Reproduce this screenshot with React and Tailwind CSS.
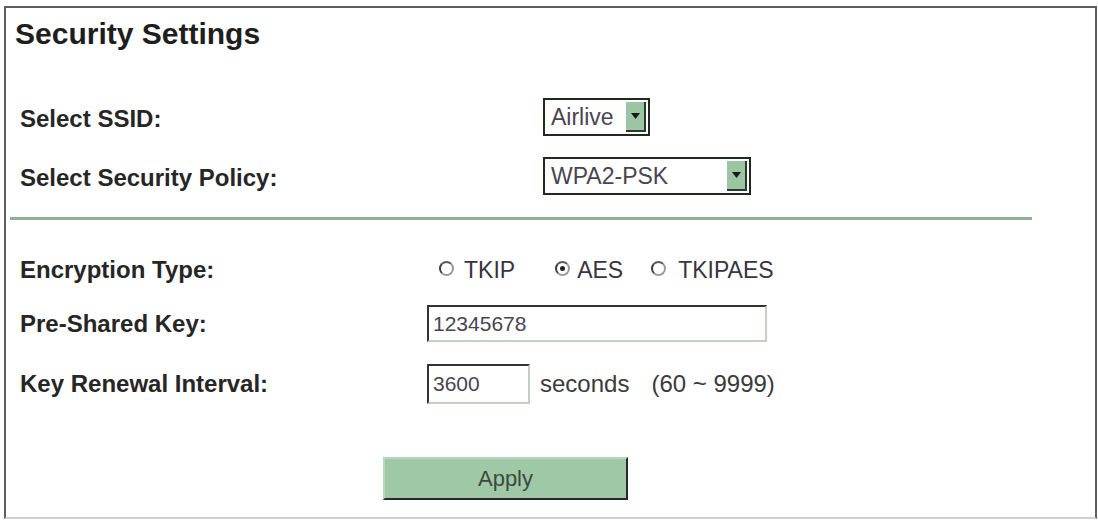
import React from "react";

const font = { fontFamily: '"Liberation Sans", Arial, sans-serif' };

function Select({ value, width }) {
  return (
    <div
      className={`flex h-[38px] items-stretch border-2 border-[#1f2a1f] bg-white ${width}`}
    >
      <div className="flex flex-1 items-center pl-[6px] text-[23px] text-[#4a4450]">
        {value}
      </div>
      <div className="my-[2px] mr-[2px] flex w-[20px] items-center justify-center border-r-2 border-b-2 border-[#2c3a2c] bg-[#9cc6a3]">
        <svg width="9" height="6" viewBox="0 0 9 6">
          <path d="M0 0 H9 L4.5 6 Z" fill="#1a1a1a" />
        </svg>
      </div>
    </div>
  );
}

function Radio({ checked }) {
  return (
    <span className="-mt-[3px] inline-flex h-[15px] w-[15px] shrink-0 items-center justify-center rounded-full border-2 border-[#9a9a9a] border-l-[#3a3a3a] border-t-[#5a5a5a] bg-white">
      {checked && <span className="h-[5px] w-[5px] rounded-full bg-[#222]" />}
    </span>
  );
}

function TextBox({ value, width, height }) {
  return (
    <div
      className={`flex items-center border-2 border-t-[#333] border-l-[#333] border-r-[#c4d0c4] border-b-[#c4d0c4] bg-white pl-[4px] text-[21px] text-[#4a4450] ${width} ${height}`}
    >
      {value}
    </div>
  );
}

export default function App() {
  return (
    <div className="h-[520px] w-[1098px] bg-white pt-[6px] pl-[4px]" style={font}>
      <div className="h-[513px] w-[1093px] border-2 border-[#5e5e5e] border-b-[#cfcfcf] text-[#262626]">
        {/* Heading */}
        <div className="flex h-[50px] items-center pl-[9px] text-[30px] font-bold text-[#1e1e1e]">
          Security Settings
        </div>

        {/* SSID / policy */}
        <div className="mt-[40px] flex h-[38px] items-center">
          <div className="mt-[4px] w-[537px] pl-[14px] text-[24px] font-bold">Select SSID:</div>
          <Select value="Airlive" width="w-[107px]" />
        </div>
        <div className="mt-[21px] flex h-[38px] items-center">
          <div className="mt-[4px] w-[537px] pl-[14px] text-[24px] font-bold">Select Security Policy:</div>
          <Select value="WPA2-PSK" width="w-[208px]" />
        </div>

        {/* Divider */}
        <div className="mt-[22px] ml-[4px] h-[3px] w-[1022px] bg-[#92b092]" />

        {/* Encryption */}
        <div className="mt-[32px] flex h-[36px] items-center">
          <div className="w-[433px] pl-[14px] text-[24px] font-bold">Encryption Type:</div>
          <div className="flex items-center text-[23px] text-[#3a3340]">
            <Radio />
            <span className="ml-[10px]">TKIP</span>
            <span className="ml-[40px] inline-flex"><Radio checked /></span>
            <span className="ml-[7px]">AES</span>
            <span className="ml-[28px] inline-flex"><Radio /></span>
            <span className="ml-[12px]">TKIPAES</span>
          </div>
        </div>

        <div className="mt-[17px] flex h-[37px] items-center">
          <div className="w-[421px] pl-[14px] text-[24px] font-bold">Pre-Shared Key:</div>
          <TextBox value="12345678" width="w-[340px]" height="h-[37px]" />
        </div>

        <div className="mt-[22px] flex h-[40px] items-center">
          <div className="w-[421px] pl-[14px] text-[24px] font-bold">Key Renewal Interval:</div>
          <TextBox value="3600" width="w-[103px]" height="h-[40px]" />
          <span className="ml-[10px] text-[24px] text-[#3a3a3a]">seconds</span>
          <span className="ml-[22px] text-[24px] text-[#3a3a3a]">(60 ~ 9999)</span>
        </div>

        {/* Apply */}
        <div className="mt-[53px] pl-[377px]">
          <button className="flex h-[43px] w-[245px] items-center justify-center border-2 border-t-[#b8d6bc] border-l-[#b8d6bc] border-r-[#2a2a2a] border-b-[#2a2a2a] bg-[#9fc8a6] text-[22px] text-[#3c4a3c]">
            Apply
          </button>
        </div>
      </div>
    </div>
  );
}
